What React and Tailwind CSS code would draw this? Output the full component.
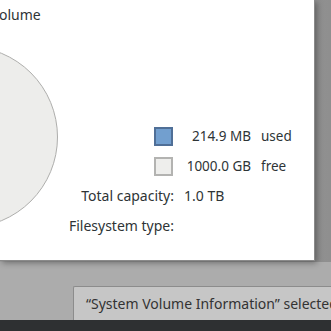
import React from 'react';

const font = { fontFamily: '"Noto Sans", "Open Sans", sans-serif' };

const Legend = ({ swatch, border, value, label }) => (
    <div className="flex items-center h-[30px]">
        <div className={`w-[19px] h-[19px] border-2 ${swatch} ${border}`} />
        <span className="w-[78px] text-right">{value}</span>
        <span className="ml-[10px]">{label}</span>
    </div>
);

const App = () => {
    return (
        <div className="w-[331px] h-[331px] overflow-hidden flex flex-col bg-[#acacac] text-[13.5px] text-[#2e3436]" style={font}>
            <div className="flex h-[262px] bg-gradient-to-r from-[#a4a4a4] to-[#8f8f8f]">
                {/* Dialog */}
                <div className="w-[315px] h-[261px] bg-white border-r border-b border-[#8a8a8a] shadow-[2px_2px_6px_rgba(0,0,0,0.35)] flex flex-col">
                    <div className="pt-[5px] h-[30px] leading-[20px] -ml-[1px] text-[14px]">olume</div>
                    <div className="flex flex-1">
                        {/* Pie */}
                        <div className="w-[59px] relative overflow-hidden">
                            <div className="absolute w-[182px] h-[182px] rounded-full bg-[#ededeb] border-[1.5px] border-[#aeaeac] left-[-124px] top-[16px]" />
                        </div>
                        <div className="flex-1 pt-[91px]">
                            <div className="ml-[95px]">
                                <Legend swatch="bg-[#729fcf]" border="border-[#4f6f97]" value="214.9 MB" label="used" />
                                <Legend swatch="bg-[#eeeeec]" border="border-[#b3b3b1]" value="1000.0 GB" label="free" />
                            </div>
                            <div className="grid grid-cols-[115px_auto] gap-x-[10px] mt-[4px] text-[14px]">
                                <span className="text-right h-[30px]">Total capacity:</span>
                                <span>1.0 TB</span>
                                <span className="text-right">Filesystem type:</span>
                                <span></span>
                            </div>
                        </div>
                    </div>
                </div>
            </div>
            {/* Status */}
            <div className="flex-1 flex flex-col">
                <div className="h-[24px]" />
                <div className="ml-[73px] h-[34px] bg-[#c6c6c6] border-l border-t border-[#8c8c8c] rounded-tl-[2px] flex items-center pl-[12px] whitespace-nowrap text-[14px] text-[#333]">
                    “System Volume Information” selected
                </div>
                <div className="flex-1 bg-[#2e3032]" />
            </div>
        </div>
    );
};

export default App;
